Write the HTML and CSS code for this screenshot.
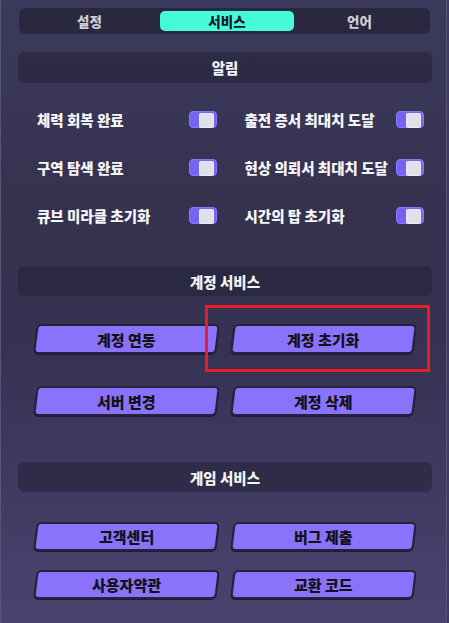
FILE: index.html
```html
<!DOCTYPE html>
<html>
<head lang="ko">
    <meta charset="UTF-8">
    <title>서비스</title>
    <link rel="stylesheet" href="styles.css">
</head>
<body>
<div id="panel">
    <ul id="tab">
        <li>설정</li>
        <li class="selected">서비스</li>
        <li>언어</li>
    </ul>

    <div class="title">알림</div>
    <div class="toggles">
        <div class="row"><span>체력 회복 완료</span><i class="switch"></i></div>
        <div class="row"><span>출전 증서 최대치 도달</span><i class="switch"></i></div>
        <div class="row"><span>구역 탐색 완료</span><i class="switch"></i></div>
        <div class="row"><span>현상 의뢰서 최대치 도달</span><i class="switch"></i></div>
        <div class="row"><span>큐브 미라클 초기화</span><i class="switch"></i></div>
        <div class="row"><span>시간의 탑 초기화</span><i class="switch"></i></div>
    </div>

    <div class="title title-account">계정 서비스</div>
    <div class="buttons buttons-account">
        <div class="btn"><span>계정 연동</span></div>
        <div class="btn"><span>계정 초기화</span></div>
        <div class="btn"><span>서버 변경</span></div>
        <div class="btn"><span>계정 삭제</span></div>
        <div class="highlight"></div>
    </div>

    <div class="title title-game">게임 서비스</div>
    <div class="buttons buttons-game">
        <div class="btn"><span>고객센터</span></div>
        <div class="btn"><span>버그 제출</span></div>
        <div class="btn"><span>사용자약관</span></div>
        <div class="btn"><span>교환 코드</span></div>
    </div>
</div>
</body>
</html>
```

FILE: styles.css
```css
*{
    margin: 0;
    padding: 0;
    box-sizing: border-box;
}
ul{
    list-style: none;
}
body{
    width: 449px;
    height: 623px;
    overflow: hidden;
    background: #3e3a62;
    font-family: "Noto Sans CJK KR", "Noto Sans", sans-serif;
    font-weight: 900;
}
#panel{
    width: 447px;
    height: 623px;
    padding: 8px 14px 0 17px;
    border-left: 1px solid #57537a;
    border-right: 1px solid #57537a;
    background: linear-gradient(#3c3a5c 0%, #35324f 35%, #363252 55%, #3e3960 75%, #4a4370 100%);
    position: relative;
}

/* tabs */
#tab{
    height: 26px;
    margin: 0 2px 0 1px;
    padding: 3px;
    display: grid;
    grid-template-columns: 1fr 1fr 1fr;
    background: #2a283f;
    border-radius: 6px;
}
#tab li{
    display: flex;
    align-items: center;
    justify-content: center;
    font-size: 13.5px;
    color: #cfcdd9;
    border-radius: 5px;
}
#tab li.selected{
    margin: 0 -2px 0 3px;
    background: #45fbd8;
    color: #15152a;
}

/* section titles */
.title{
    height: 31px;
    margin-top: 18px;
    display: flex;
    align-items: center;
    justify-content: center;
    background: rgba(34, 32, 52, 0.55);
    border-radius: 6px;
    color: #f4f3f8;
    font-size: 14.5px;
}
.title-account{
    height: 30px;
    margin-top: 27px;
}
.title-game{
    height: 30px;
    margin-top: 46px;
}

/* switches */
.toggles{
    margin-top: 12px;
    padding: 0 8px 0 19px;
    display: grid;
    grid-template-columns: 1fr 1fr;
    grid-auto-rows: 48px;
    column-gap: 28px;
}
.toggles .row{
    display: flex;
    align-items: center;
    justify-content: space-between;
    color: #f7f6fb;
    font-size: 14.5px;
}
.switch{
    width: 28px;
    height: 17px;
    padding: 2px;
    display: flex;
    justify-content: flex-end;
    background: #7564f0;
    border: 1px solid #8877ff;
    border-radius: 4px;
}
.switch:after{
    content: "";
    width: 13px;
    height: 13px;
    margin-top: -1px;
    background: #e1e0ea;
    border: 1px dotted #f7f7fb;
    border-radius: 2px;
}

/* buttons */
.buttons{
    position: relative;
    padding: 0 18px 0 17px;
    display: grid;
    grid-template-columns: 1fr 1fr;
    column-gap: 14px;
}
.buttons-account{
    margin-top: 28px;
    grid-auto-rows: 30px;
    row-gap: 32px;
}
.buttons-game{
    margin-top: 30px;
    grid-auto-rows: 29px;
    row-gap: 19px;
}
.btn{
    display: flex;
    align-items: center;
    justify-content: center;
    background: #8a72fb;
    border: 2px solid #26223b;
    border-radius: 5px;
    box-shadow: 0 1px 0 #1f1c31;
    transform: skewX(-7deg);
    color: #121218;
    font-size: 15px;
}
.btn span{
    transform: skewX(7deg);
}

.highlight{
    position: absolute;
    top: -19px;
    left: 187px;
    width: 225px;
    height: 67px;
    border: 3.5px solid #ea1d27;
}
```
